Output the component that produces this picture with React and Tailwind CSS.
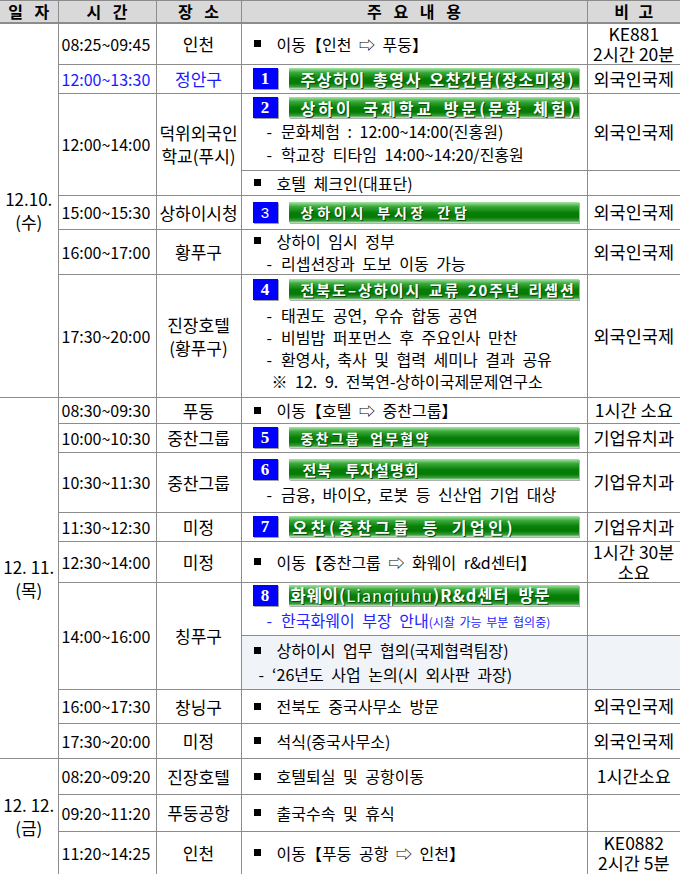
import React from 'react'

// 일정표 — 12.10 ~ 12.12 상하이 방문 일정

const cell = 'border border-[#8c8c8c] p-0'

function NumBox({ n, sans }) {
  return (
    <div
      className={[
        'w-[25px] h-[21px] shrink-0 bg-[#0000ff] text-white flex items-center justify-center leading-none shadow-[1px_1px_0_#a0a0a0]',
        sans
          ? "font-['Liberation_Sans',sans-serif] text-[15px]"
          : "font-['Liberation_Serif',serif] font-bold text-[17px]",
      ].join(' ')}
    >
      {n}
    </div>
  )
}

function Bar({ n, sans, children, textClass }) {
  return (
    <div className="flex items-center gap-[11px]">
      <NumBox n={n} sans={sans} />
      <div
        className={[
          'w-[290px] h-[21px] flex items-center overflow-hidden whitespace-nowrap text-white font-bold leading-[18px]',
          'bg-[linear-gradient(180deg,#a6e6a6_0%,#3aa83a_22%,#078007_50%,#047a04_72%,#3e9e3e_90%,#d2ecd2_100%)]',
          'shadow-[1px_1px_0_#b0b0b0] [text-shadow:1px_1px_0_#0a4a0a]',
          textClass,
        ].join(' ')}
      >
        {children}
      </div>
    </div>
  )
}

function Bullet({ children, className = '' }) {
  return (
    <div className={'flex items-center whitespace-nowrap ' + className}>
      <span className="inline-block w-[7px] h-[7px] bg-black ml-[1px] mr-[16px] shrink-0" />
      <span>{children}</span>
    </div>
  )
}

function Dash({ children, className = '' }) {
  return (
    <div className={'whitespace-nowrap pl-[14px] ' + className}>
      <span className="mr-[9px]">-</span>
      {children}
    </div>
  )
}

function Row({ h, className = '', children }) {
  return <tr className={h + ' ' + className}>{children}</tr>
}

function Time({ children, blue, rowSpan }) {
  return (
    <td rowSpan={rowSpan} className={cell + ' pl-[3px] text-[16px] leading-[20px] ' + (blue ? 'text-[#1a1aff]' : '')}>
      {children}
    </td>
  )
}

function Place({ children, blue, rowSpan }) {
  return (
    <td rowSpan={rowSpan} className={cell + ' text-center text-[17px] leading-[23px] ' + (blue ? 'text-[#1a1aff]' : '')}>
      {children}
    </td>
  )
}

function Content({ children, className = '' }) {
  return (
    <td className={cell + ' pl-[11px] text-[16px] leading-[22px] [word-spacing:4px] ' + className}>
      {children}
    </td>
  )
}

function Note({ children, className = '' }) {
  return <td className={cell + ' border-r-0 text-center text-[17.5px] leading-[20px] ' + className}>{children}</td>
}

function DateCell({ rowSpan, children }) {
  return (
    <td rowSpan={rowSpan} className={cell + ' border-l-0 text-center text-[17px] leading-[23px]'}>
      {children}
    </td>
  )
}

export default function App() {
  return (
    <div className="w-[680px] h-[874px] bg-white overflow-hidden text-black font-['Noto_Sans_CJK_KR','Noto_Sans',sans-serif]">
      <table className="w-[680px] table-fixed border-collapse">
        <colgroup>
          <col className="w-[58px]" />
          <col className="w-[98px]" />
          <col className="w-[85px]" />
          <col className="w-[346px]" />
          <col className="w-[93px]" />
        </colgroup>
        <tbody>
          <tr className="h-[22px] bg-[#d9d9d9] font-bold text-[16px] leading-[18px]">
            <td className={cell + ' border-l-0 border-b-2 text-center [word-spacing:8px]'}>일 자</td>
            <td className={cell + ' border-b-2 text-center [word-spacing:8px]'}>시 간</td>
            <td className={cell + ' border-b-2 text-center [word-spacing:8px]'}>장 소</td>
            <td className={cell + ' border-b-2 text-center [word-spacing:8px]'}>주 요 내 용</td>
            <td className={cell + ' border-r-0 border-b-2 text-center [word-spacing:6px]'}>비 고</td>
          </tr>

          {/* 12.10 (수) */}
          <Row h="h-[37px]">
            <DateCell rowSpan={7}>
              12.10.
              <br />
              (수)
            </DateCell>
            <Time>08:25~09:45</Time>
            <Place>인천</Place>
            <Content>
              <Bullet>이동【인천 ⇨ 푸둥】</Bullet>
            </Content>
            <Note className="text-[16.5px] leading-[18px]">
              KE881
              <br />
              2시간 20분
            </Note>
          </Row>
          <Row h="h-[29px]">
            <Time blue>12:00~13:30</Time>
            <Place blue>정안구</Place>
            <Content>
              <Bar n="1" textClass="pl-[12px] text-[16px] tracking-[1.6px] [word-spacing:2px]">
                주상하이 총영사 오찬간담(장소미정)
              </Bar>
            </Content>
            <Note>외국인국제</Note>
          </Row>
          <Row h="h-[77px]">
            <Time rowSpan={2}>12:00~14:00</Time>
            <Place rowSpan={2}>
              덕위외국인
              <br />
              학교(푸시)
            </Place>
            <Content className="leading-[23px]">
              <Bar n="2" textClass="pl-[12px] text-[16px] tracking-[3px] [word-spacing:3px]">
                상하이 국제학교 방문(문화 체험)
              </Bar>
              <Dash className="mt-[2px]">문화체험 : 12:00~14:00(진홍원)</Dash>
              <Dash>학교장 티타임 14:00~14:20/진홍원</Dash>
            </Content>
            <Note>외국인국제</Note>
          </Row>
          <Row h="h-[25px]">
            <Content>
              <Bullet>호텔 체크인(대표단)</Bullet>
            </Content>
            <Note />
          </Row>
          <Row h="h-[34px]">
            <Time>15:00~15:30</Time>
            <Place>상하이시청</Place>
            <Content>
              <Bar n="3" sans textClass="pl-[12px] text-[14px] tracking-[3.8px] [word-spacing:3px]">
                상하이시 부시장 간담
              </Bar>
            </Content>
            <Note>외국인국제</Note>
          </Row>
          <Row h="h-[42px]">
            <Time>16:00~17:00</Time>
            <Place>황푸구</Place>
            <Content className="leading-[19px]">
              <Bullet>상하이 임시 정부</Bullet>
              <Dash>리셉션장과 도보 이동 가능</Dash>
            </Content>
            <Note>외국인국제</Note>
          </Row>
          <Row h="h-[123px]">
            <Time>17:30~20:00</Time>
            <Place>
              진장호텔
              <br />
              (황푸구)
            </Place>
            <Content className="leading-[22px]">
              <Bar n="4" textClass="pl-[12px] text-[15px] tracking-[2px] [word-spacing:2px]">
                전북도–상하이시 교류 20주년 리셉션
              </Bar>
              <Dash className="mt-[4px]">태권도 공연, 우슈 합동 공연</Dash>
              <Dash>비빔밥 퍼포먼스 후 주요인사 만찬</Dash>
              <Dash>환영사, 축사 및 협력 세미나 결과 공유</Dash>
              <div className="pl-[19px] whitespace-nowrap">※ 12. 9. 전북연-상하이국제문제연구소</div>
            </Content>
            <Note>외국인국제</Note>
          </Row>

          {/* 12.11 (목) */}
          <Row h="h-[26px]">
            <DateCell rowSpan={9}>
              12. 11.
              <br />
              (목)
            </DateCell>
            <Time>08:30~09:30</Time>
            <Place>푸둥</Place>
            <Content>
              <Bullet>이동【호텔 ⇨ 중찬그룹】</Bullet>
            </Content>
            <Note>1시간 소요</Note>
          </Row>
          <Row h="h-[29px]">
            <Time>10:00~10:30</Time>
            <Place>중찬그룹</Place>
            <Content>
              <Bar n="5" textClass="pl-[12px] text-[14px] tracking-[2.2px] [word-spacing:4px]">
                중찬그룹 업무협약
              </Bar>
            </Content>
            <Note>기업유치과</Note>
          </Row>
          <Row h="h-[60px]">
            <Time>10:30~11:30</Time>
            <Place>중찬그룹</Place>
            <Content>
              <Bar n="6" textClass="pl-[14px] text-[15px] tracking-[1px] [word-spacing:9px]">
                전북 투자설명회
              </Bar>
              <Dash className="mt-[3px]">금융, 바이오, 로봇 등 신산업 기업 대상</Dash>
            </Content>
            <Note>기업유치과</Note>
          </Row>
          <Row h="h-[29px]">
            <Time>11:30~12:30</Time>
            <Place>미정</Place>
            <Content>
              <Bar n="7" textClass="pl-[4px] text-[16px] tracking-[3.5px] [word-spacing:4px]">
                오찬(중찬그룹 등 기업인)
              </Bar>
            </Content>
            <Note>기업유치과</Note>
          </Row>
          <Row h="h-[41px]">
            <Time>12:30~14:00</Time>
            <Place>미정</Place>
            <Content>
              <Bullet>이동【중찬그룹 ⇨ 화웨이 r&amp;d센터】</Bullet>
            </Content>
            <Note className="text-[16.5px] leading-[18px]">
              1시간 30분
              <br />
              소요
            </Note>
          </Row>
          <Row h="h-[53px]">
            <Time rowSpan={2}>14:00~16:00</Time>
            <Place rowSpan={2}>칭푸구</Place>
            <Content>
              <Bar n="8" textClass="pl-[2px] text-[16.5px] tracking-[1px]">
                화웨이(<span className="font-normal">Lianqiuhu</span>)R&amp;d센터 방문
              </Bar>
              <Dash className="mt-[3px] text-[#2323ff]">
                한국화웨이 부장 안내<span className="text-[12px] [word-spacing:2px]">(시찰 가능 부분 협의중)</span>
              </Dash>
            </Content>
            <Note />
          </Row>
          <Row h="h-[54px]" className="bg-[#f0f3f8]">
            <Content className="leading-[24px]">
              <Bullet>상하이시 업무 협의(국제협력팀장)</Bullet>
              <div className="pl-[6px] whitespace-nowrap">
                <span className="mr-[8px]">-</span>‘26년도 사업 논의(시 외사판 과장)
              </div>
            </Content>
            <Note />
          </Row>
          <Row h="h-[34px]">
            <Time>16:00~17:30</Time>
            <Place>창닝구</Place>
            <Content>
              <Bullet>전북도 중국사무소 방문</Bullet>
            </Content>
            <Note>외국인국제</Note>
          </Row>
          <Row h="h-[35px]">
            <Time>17:30~20:00</Time>
            <Place>미정</Place>
            <Content>
              <Bullet>석식(중국사무소)</Bullet>
            </Content>
            <Note>외국인국제</Note>
          </Row>

          {/* 12.12 (금) */}
          <Row h="h-[36px]">
            <DateCell rowSpan={3}>
              12. 12.
              <br />
              (금)
            </DateCell>
            <Time>08:20~09:20</Time>
            <Place>진장호텔</Place>
            <Content>
              <Bullet>호텔퇴실 및 공항이동</Bullet>
            </Content>
            <Note>1시간소요</Note>
          </Row>
          <Row h="h-[37px]">
            <Time>09:20~11:20</Time>
            <Place>푸둥공항</Place>
            <Content>
              <Bullet>출국수속 및 휴식</Bullet>
            </Content>
            <Note />
          </Row>
          <Row h="h-[43px]">
            <Time>11:20~14:25</Time>
            <Place>인천</Place>
            <Content>
              <Bullet>이동【푸둥 공항 ⇨ 인천】</Bullet>
            </Content>
            <Note className="text-[16.5px] leading-[18px]">
              KE0882
              <br />
              2시간 5분
            </Note>
          </Row>
        </tbody>
      </table>
    </div>
  )
}
